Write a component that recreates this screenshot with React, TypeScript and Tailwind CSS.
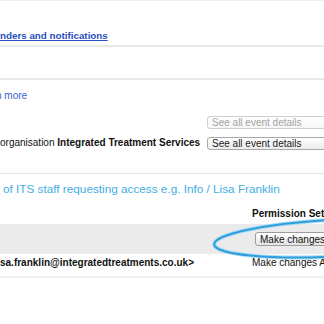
export default function App() {
  return (
    <main
      className="relative w-[324px] h-[324px] overflow-hidden bg-white text-[10px] text-[#111]"
      style={{ fontFamily: '"Liberation Sans", Arial, sans-serif' }}
    >
      <div className="h-px bg-[#efefef]" />

      {/* Reminders */}
      <div className="h-[44px] pt-[29px] leading-[12px]">
        <a className="text-[9.8px] font-bold text-[#2a50c4] underline">nders and notifications</a>
      </div>
      <div className="h-[2px] bg-[#e9e9e9]" />
      <div className="h-[31px]" />
      <div className="h-[2px] bg-[#e9e9e9]" />

      {/* Event details */}
      <div className="pt-[10px] leading-[12px]">
        <a className="ml-[-4px] text-[#3a62d0]">n more</a>
      </div>
      <div className="mt-[10px]">
        <div className="flex h-[21px] items-center">
          <div className="w-[207px] shrink-0" />
          <div className="flex h-[13px] w-[140px] shrink-0 items-center whitespace-nowrap rounded-[3px] border border-[#cfcfcf] bg-gradient-to-b from-white to-[#f6f6f6] pl-[4px] text-[#a3a3a3]">
            See all event details
          </div>
        </div>
        <div className="flex h-[21px] items-center">
          <div className="w-[207px] shrink-0 whitespace-nowrap pb-[2px] leading-[12px]">
            organisation <b>Integrated Treatment Services</b>
          </div>
          <div className="flex h-[13px] w-[140px] shrink-0 items-center whitespace-nowrap rounded-[3px] border border-[#a9a9a9] bg-gradient-to-b from-white to-[#ececec] pl-[4px] text-[#1a1a1a]">
            See all event details
          </div>
        </div>
      </div>
      <div className="mt-[19px] h-px bg-[#e6e6e6]" />

      {/* Staff access */}
      <div className="whitespace-nowrap pt-[8px] pl-[3px] text-[11.75px] leading-[14px] text-[#43ade4]">
        of ITS staff requesting access e.g. Info / Lisa Franklin
      </div>
      <div className="mt-[12px] flex h-[16px]">
        <div className="w-[252px] shrink-0" />
        <div className="shrink-0 whitespace-nowrap font-bold leading-[12px]">Permission Set</div>
      </div>
      <div className="flex h-[30px] items-center bg-[#ebebeb]">
        <div className="w-[255px] shrink-0" />
        <button className="flex h-[14px] w-[110px] shrink-0 items-center whitespace-nowrap rounded-[3px] border border-[#9c9c9c] bg-gradient-to-b from-white to-[#e4e4e4] pl-[4px] text-[10px] text-[#111]">
          Make changes All
        </button>
      </div>
      <div className="flex h-[22px] pt-[3px] leading-[12px]">
        <div className="w-[252px] shrink-0 whitespace-nowrap font-bold">sa.franklin@integratedtreatments.co.uk&gt;</div>
        <div className="shrink-0 whitespace-nowrap">Make changes All</div>
      </div>
      <div className="h-[2px] bg-[#f0f0f0]" />

      {/* annotation ring */}
      <svg className="pointer-events-none absolute left-[200px] top-[205px]" width="124" height="60" viewBox="0 0 124 60">
        <ellipse
          cx="136"
          cy="33"
          rx="122"
          ry="18.5"
          transform="rotate(-3 136 33)"
          fill="none"
          stroke="#a8daf3"
          strokeWidth="4"
        />
        <ellipse
          cx="136"
          cy="33"
          rx="122"
          ry="18.5"
          transform="rotate(-3 136 33)"
          fill="none"
          stroke="#2f9fdb"
          strokeWidth="2"
        />
      </svg>
    </main>
  )
}
